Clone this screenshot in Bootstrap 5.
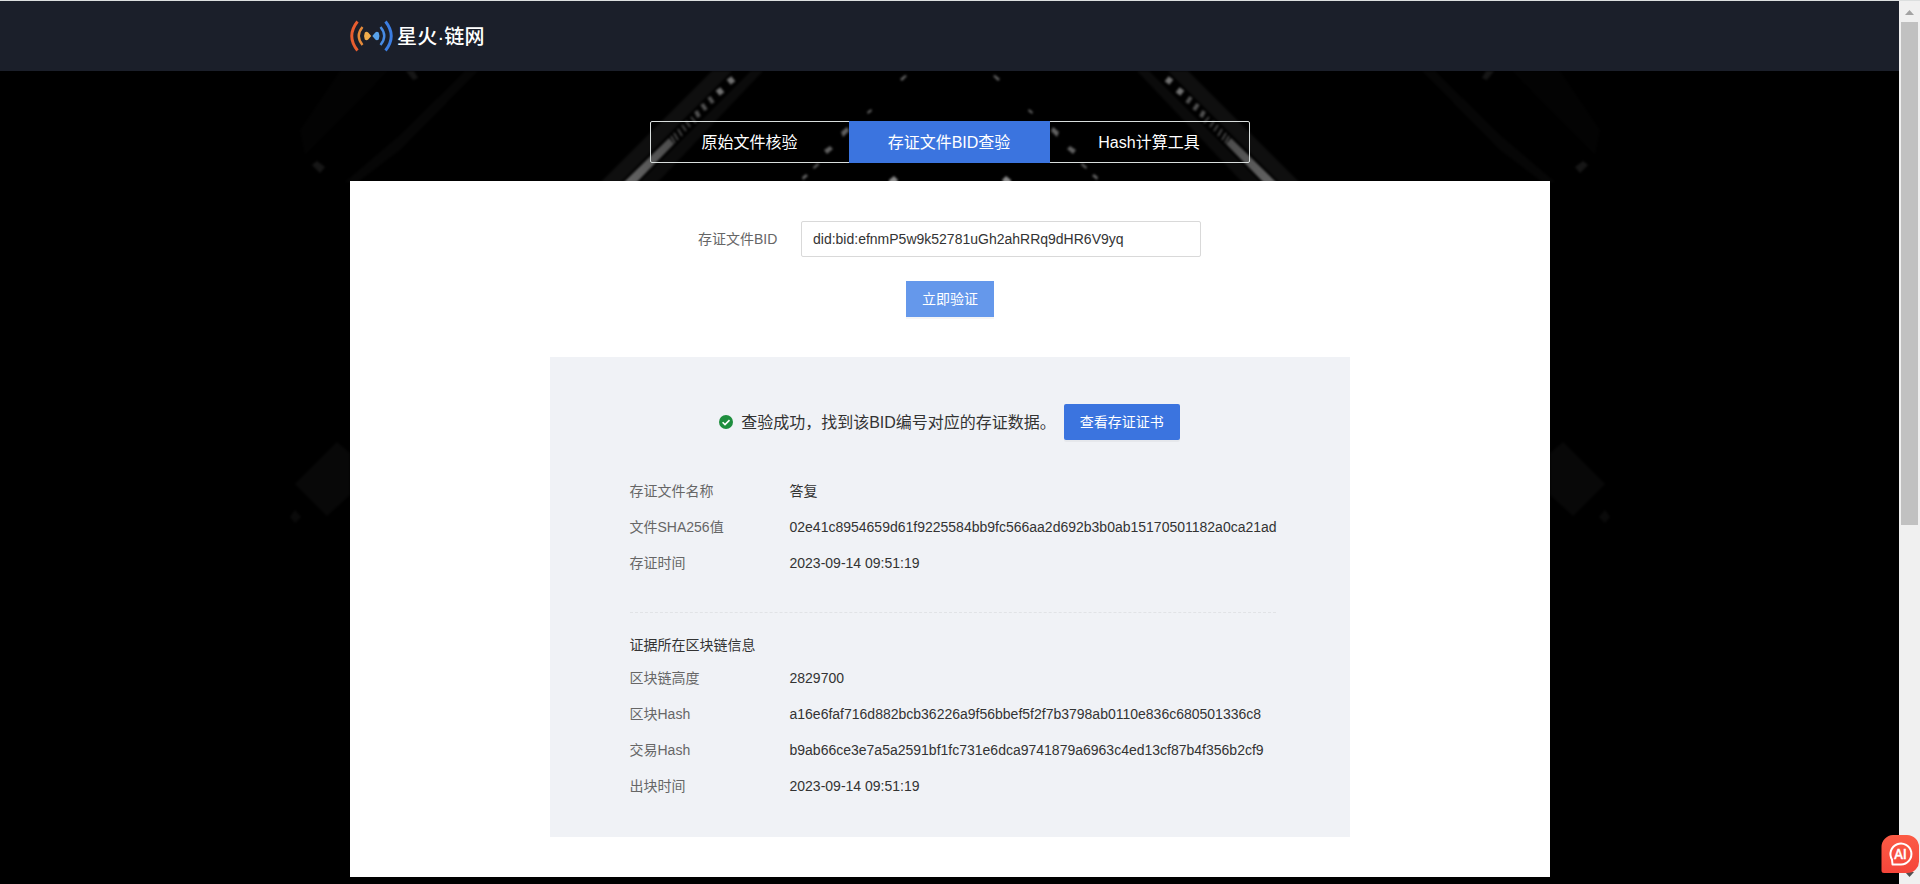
<!DOCTYPE html>
<html lang="zh-CN">
<head>
<meta charset="utf-8">
<title>星火·链网</title>
<link href="https://cdn.jsdelivr.net/npm/bootstrap@5.3.0/dist/css/bootstrap.min.css" rel="stylesheet">
<script src="https://cdn.jsdelivr.net/npm/bootstrap@5.3.0/dist/js/bootstrap.bundle.min.js" defer></script>
<style>
html,body{height:884px;overflow:hidden}
body{background:#000;font-family:"Liberation Sans","Noto Sans CJK SC",sans-serif;font-size:14px;line-height:20px;color:#333}
.top-line{height:1px;background:#dcdfdf;width:1920px}
.site-bar{width:1899px;height:70px;background:#1b1f2a}
.wrap{width:1200px;margin-left:350px}
.brand-name{font-size:20px;line-height:28px;color:#fff;font-weight:500;white-space:nowrap;letter-spacing:.2px;padding-top:1px}
.backdrop{position:absolute;left:0;top:71px;z-index:0}
.main-area{width:1899px;position:relative;z-index:1;padding-top:50px}
.tabs{width:600px;height:42px;margin:0 auto 18px;border:1px solid #d9dedd;border-radius:2px}
.tabs a{font-size:16px;line-height:24px;color:#fff;text-decoration:none;width:199px;padding:1px 1px 0 0;display:flex;align-items:center;justify-content:center}
.tabs a:first-child{width:198px}
.tabs a.on{background:#3b74df;margin:-1px 0;width:201px}
.sheet{height:696px;background:#fff;padding-top:40px}
.bid-row{padding-left:348px}
.field-label{width:79px;color:#666;white-space:nowrap}
.bid-input{width:400px;height:36px;border:1px solid #d9d9d9;border-radius:2px;padding:0 11px;font-size:14px;color:#333}
.act{font-size:14px;line-height:20px;height:36px;border:0;border-radius:2px;padding:0;color:#fff;background:#3b74df;box-shadow:0 2px 0 rgba(0,0,0,.04)}
.act.soft{background:#6598eb;width:88px;border-radius:0}
.result{width:800px;height:480px;background:#f0f2f6;margin:40px auto 0;padding:47px 74px 0 79.5px}
.status-row{padding-right:6.5px}
.status-msg{font-size:16px;line-height:24px;padding-top:1px}
.cert{width:116px;margin-left:8px}
.rows1{margin-top:33px}
.rows2{margin-top:5px}
.kv{height:36px}
.kv dt{width:160px;flex-shrink:0;font-weight:400;color:#666}
.kv dd{margin:0;white-space:nowrap}
.split{border-top:1px dashed #e1e3e6;margin:31px 0 22px}
.scroller{position:absolute;left:1899px;top:1px;width:21px;height:883px;background:#f0f0f0}
.thumb{width:17px;height:503px;margin-left:2px;background:#c1c1c1}
.ai{position:absolute;left:1880px;top:833px}
</style>
</head>
<body>
<div class="top-line"></div>
<header class="site-bar">
  <div class="wrap h-100 d-flex align-items-center">
    <svg width="43" height="32" viewBox="0 0 43 32" fill="none" class="me-1 flex-shrink-0">
      <path d="M7.500 1.500Q-4 16 7.500 30.500" stroke="#e95d2f" stroke-width="2.900"/>
      <path d="M12.500 7Q5 16 12.500 25" stroke="#e58a3a" stroke-width="2.400"/>
      <path d="M35.500 1.500Q47 16 35.500 30.500" stroke="#3b7de2" stroke-width="2.900"/>
      <path d="M30.500 7Q38 16 30.500 25" stroke="#478be5" stroke-width="2.400"/>
      <path d="M14.800 12.500q1.800-1.500 3.400 0L21.200 16l-3 3.500q-1.600 1.500-3.400 0-1.500-3.500 0-7Z" fill="#f0ac4b"/>
      <path d="M28.700 12.500q-1.800-1.500-3.400 0L22.300 16l3 3.500q1.600 1.500 3.400 0 1.500-3.500 0-7Z" fill="#58a2ea"/>
    </svg>
    <span class="brand-name">星火·链网</span>
  </div>
</header>
<svg class="backdrop" width="1899" height="813" viewBox="0 71 1899 813">
  <defs>
    <filter id="soft" x="-5%" y="-5%" width="110%" height="110%" color-interpolation-filters="sRGB"><feGaussianBlur stdDeviation=".8"/></filter>
    <linearGradient id="beam" x1="0" y1="1" x2="1" y2="0"><stop offset="0" stop-color="#646464"/><stop offset="1" stop-color="#4c4c4c"/></linearGradient>
    <g id="half" filter="url(#soft)">
      <path d="M300 130L340 71H388L305 155Z" fill="#030303"/>
      <path d="M465 71H478L400 150L358 182H345L400 135Z" fill="#060606"/>
      <path d="M406 71h8l4 7-5 2ZM312 165l5-4 8 6-5 6Z" fill="#161616"/>
      <path d="M599 184L712 71H732L619 184Z" fill="#0f0f0f"/>
      <path d="M638 184L751 71H763L656 184Z" fill="#0b0b0b"/>
      <path d="M622 184L669 138L674 144L635 184Z" fill="url(#beam)"/>
      <g stroke="#484848">
        <path stroke-width="1.800" d="M671 136l4 7M674 133l4 7M678 129l4 7M682 125l4 6M686 121l4 6M691 117l5 6"/>
        <path stroke-width="4" stroke="#505050" d="M696 111l3 6M702 104l4 6M709 97l4 6"/>
        <path stroke-width="6" stroke="#707070" d="M718 89l4 5M729 78l4 5"/>
      </g>
      <path fill="#606060" d="M900 79l5-4 2 1-5 5ZM867 112l4-3 1 2-4 3ZM841 132l6-5 2 4-6 6ZM824 150l6-4 3 3-6 5ZM813 167l5-4 1 2-5 4ZM802 177l4-3 2 2-5 4Z"/>
      <path fill="#8a8a8a" d="M889 180l5-4 4 4-3 5h-6Z"/>
      <path d="M337 442l13 11v42l-23 21-32-32Z" fill="#080808"/>
      <path d="M295 510l6 7-6 6-5-6Z" fill="#0a0a0a"/>
    </g>
  </defs>
  <use href="#half"/>
  <use href="#half" transform="translate(1900 0) scale(-1 1)"/>
</svg>
<main class="main-area">
  <div class="wrap">
    <nav class="tabs d-flex">
      <a href="#">原始文件核验</a><a href="#" class="on">存证文件BID查验</a><a href="#">Hash计算工具</a>
    </nav>
    <section class="sheet">
      <div class="bid-row d-flex align-items-center">
        <label class="field-label me-4" for="bid">存证文件BID</label>
        <input id="bid" class="bid-input" value="did:bid:efnmP5w9k52781uGh2ahRRq9dHR6V9yq">
      </div>
      <div class="mt-4 d-flex justify-content-center"><button class="btn act soft">立即验证</button></div>
      <div class="result">
        <div class="d-flex align-items-center justify-content-center status-row">
          <svg width="14" height="14" viewBox="0 0 14 14" class="me-2"><circle cx="7" cy="7" r="7" fill="#1e8e3e"/><path d="M3.600 7.200l2.400 2.400 4.500-4.500" fill="none" stroke="#fff" stroke-width="1.600"/></svg>
          <span class="status-msg">查验成功，找到该BID编号对应的存证数据。</span>
          <button class="btn act cert">查看存证证书</button>
        </div>
        <dl class="rows1 mb-0">
          <div class="kv d-flex align-items-center"><dt>存证文件名称</dt><dd>答复</dd></div>
          <div class="kv d-flex align-items-center"><dt>文件SHA256值</dt><dd>02e41c8954659d61f9225584bb9fc566aa2d692b3b0ab15170501182a0ca21ad</dd></div>
          <div class="kv d-flex align-items-center"><dt>存证时间</dt><dd>2023-09-14 09:51:19</dd></div>
        </dl>
        <div class="split"></div>
        <div class="sub-title">证据所在区块链信息</div>
        <dl class="rows2 mb-0">
          <div class="kv d-flex align-items-center"><dt>区块链高度</dt><dd>2829700</dd></div>
          <div class="kv d-flex align-items-center"><dt>区块Hash</dt><dd>a16e6faf716d882bcb36226a9f56bbef5f2f7b3798ab0110e836c680501336c8</dd></div>
          <div class="kv d-flex align-items-center"><dt>交易Hash</dt><dd>b9ab66ce3e7a5a2591bf1fc731e6dca9741879a6963c4ed13cf87b4f356b2cf9</dd></div>
          <div class="kv d-flex align-items-center"><dt>出块时间</dt><dd>2023-09-14 09:51:19</dd></div>
        </dl>
      </div>
    </section>
  </div>
</main>
<div class="scroller">
  <svg width="21" height="21" class="d-block"><path d="M6 14h9l-4.500-5Z" fill="#a3a3a3"/></svg>
  <div class="thumb"></div>
</div>
<svg class="ai" width="40" height="46" viewBox="0 0 40 46">
  <path d="M25 39h9l-4.500 5Z" fill="#505050"/>
  <defs><linearGradient id="red" x1="0" y1="0" x2="0" y2="1"><stop offset="0" stop-color="#fc5b45"/><stop offset="1" stop-color="#f5453a"/></linearGradient></defs>
  <path d="M13 2h14a12 12 0 0 1 12 12v13a12 12 0 0 1-12 13H4a2.500 2.500 0 0 1-2.500-2.500V14A12 12 0 0 1 13 2Z" fill="url(#red)"/>
  <path d="M12.500 31.500H21a10.500 10.500 0 1 0-9-5Z" fill="none" stroke="#fff" stroke-width="2" stroke-linejoin="round"/>
  <text x="20.500" y="25.500" text-anchor="middle" font-family="Lato, sans-serif" font-weight="700" font-size="12.500" fill="#fff" stroke="#fff" stroke-width=".3">AI</text>
</svg>
</body>
</html>
